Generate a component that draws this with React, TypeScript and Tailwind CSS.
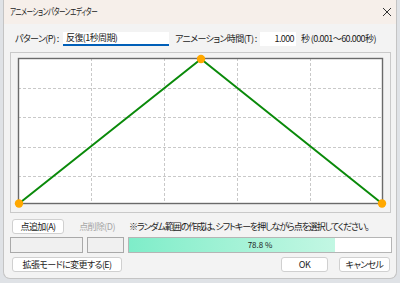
import React from "react";

const font = "font-['Noto_Sans_CJK_JP','Noto_Sans',sans-serif] [font-feature-settings:'palt']";

function Btn({ children, w, disabled }: { children: React.ReactNode; w: string; disabled?: boolean }) {
  return (
    <div
      className={`${w} h-[15px] shrink-0 flex items-center justify-center rounded-[3px] text-[9px] leading-none whitespace-nowrap ${
        disabled ? "text-[#a6a6a6] bg-transparent" : "bg-white border border-[#d0d0d0] text-[#1b1b1b]"
      }`}
    >
      {children}
    </div>
  );
}

function Chart() {
  const W = 365;
  const H = 146;
  const vx = [73, 146, 219, 292];
  const hy = [30, 59, 89, 118];
  return (
    <svg width={W} height={H} className="block overflow-visible">
      <rect x={0} y={0} width={W} height={H} fill="#ffffff" />
      {vx.map((x) => (
        <line key={"v" + x} x1={x + 0.5} y1={0} x2={x + 0.5} y2={H} stroke="#c9c9c9" strokeDasharray="3 2" />
      ))}
      {hy.map((y) => (
        <line key={"h" + y} x1={0} y1={y + 0.5} x2={W} y2={y + 0.5} stroke="#c9c9c9" strokeDasharray="3 2" />
      ))}
      <rect x={0.5} y={0.5} width={W - 1} height={H - 1} fill="none" stroke="#6a6a6a" strokeWidth={1.4} />
      <polyline points={`1,${H - 0.5} 183,1 ${W - 1},${H - 0.5}`} fill="none" stroke="#0a8a0a" strokeWidth={2} />
      <circle cx={1} cy={H - 0.5} r={4.2} fill="#ffa800" />
      <circle cx={183} cy={1} r={4.2} fill="#ffa800" />
      <circle cx={W - 1} cy={H - 0.5} r={4.2} fill="#ffa800" />
    </svg>
  );
}

export default function App() {
  return (
    <div className={`w-[400px] h-[283px] bg-[#dfe2e6] overflow-hidden ${font} tracking-[-0.6px]`}>
      <div className="ml-[3px] w-[394px] h-[279px] bg-[#f3f3f3] rounded-b-[7px] border-x border-b border-[#c4c4c4] flex flex-col text-[#1b1b1b]">
        {/* title bar */}
        <div className="h-[24px] shrink-0 bg-[#f6efea] flex items-center justify-between pl-[6px] pr-[4px]">
          <span className="inline-block text-[9.5px] leading-none whitespace-nowrap origin-left scale-x-[0.69]">アニメーションパターンエディター</span>
          <svg width="10" height="10" viewBox="0 0 10 10">
            <path d="M1 1 L9 9 M9 1 L1 9" stroke="#333" strokeWidth="1" />
          </svg>
        </div>

        {/* row 1 */}
        <div className="flex items-center h-[15px] shrink-0 mt-[7px] pl-[11px] text-[9px] leading-none whitespace-nowrap">
          <span className="w-[48px] shrink-0">パターン(P) :</span>
          <div className="w-[106px] h-[14px] shrink-0 bg-white border-b-2 border-[#005fb8] flex items-center pl-[3px]">
            反復(1秒周期)
          </div>
          <span className="ml-[6px] w-[85px] shrink-0">アニメーション時間(T) :</span>
          <div className="w-[36px] h-[14px] shrink-0 bg-white flex items-center justify-end pr-[2px]">1.000</div>
          <span className="ml-[5px]">秒 (0.001～60.000秒)</span>
        </div>

        {/* chart panel */}
        <div className="ml-[6px] mt-[6px] shrink-0 w-[381px] h-[161px] border border-[#c9c9c9] bg-[#f3f3f3] pl-[7px] pt-[5px]">
          <Chart />
        </div>

        {/* buttons row */}
        <div className="flex items-center h-[15px] shrink-0 mt-[6px] pl-[8px] text-[9px] leading-none whitespace-nowrap">
          <Btn w="w-[52px]">点追加(A)</Btn>
          <div className="ml-[7px]">
            <Btn w="w-[52px]" disabled>
              点削除(D)
            </Btn>
          </div>
          <span className="ml-[6px] tracking-[-1.1px]">※ランダム範囲の作成は、シフトキーを押しながら点を選択してください。</span>
        </div>

        {/* status row */}
        <div className="flex items-center mt-[3px] pl-[6px] h-[16px] shrink-0 text-[9px] leading-none">
          <div className="w-[73px] h-[16px] border border-[#a9a9a9] bg-[#f0f0f0]" />
          <div className="ml-[4px] w-[37px] h-[16px] border border-[#a9a9a9] bg-[#f0f0f0]" />
          <div className="ml-[4px] w-[264px] h-[16px] border border-[#b5b5b5] bg-white relative overflow-hidden">
            <div className="absolute left-0 top-0 bottom-0 w-[78.8%] bg-gradient-to-r from-[#7eedc9] to-[#c2f7e3]" />
            <div className="absolute inset-0 flex items-center justify-center text-[8px] tracking-normal">78.8 %</div>
          </div>
        </div>

        {/* bottom row */}
        <div className="flex items-center h-[15px] shrink-0 mt-[4px] pl-[8px] text-[9px] leading-none">
          <Btn w="w-[110px]">拡張モードに変更する(E)</Btn>
          <div className="ml-[159px]">
            <Btn w="w-[47px]">OK</Btn>
          </div>
          <div className="ml-[11px]">
            <Btn w="w-[51px]">キャンセル</Btn>
          </div>
        </div>
      </div>
    </div>
  );
}
